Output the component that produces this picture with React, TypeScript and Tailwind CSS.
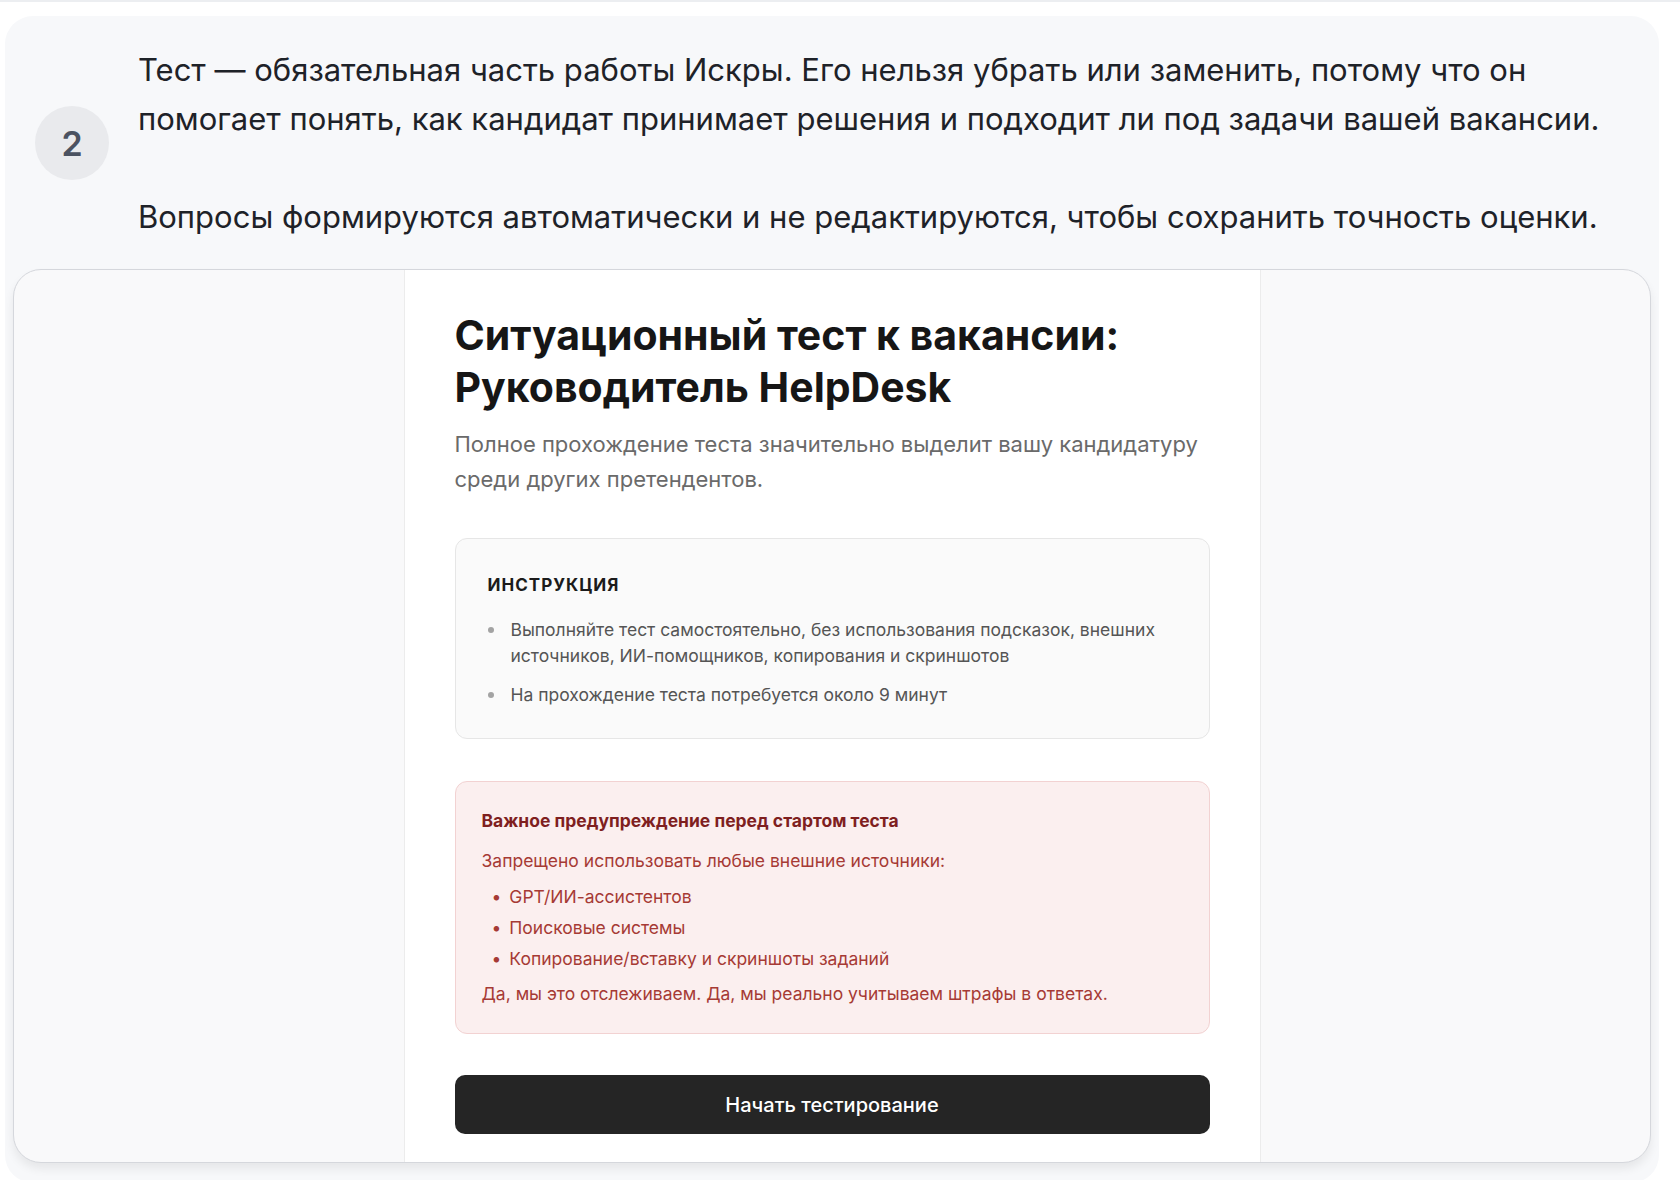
const rules = [
  "Выполняйте тест самостоятельно, без использования подсказок, внешних источников, ИИ-помощников, копирования и скриншотов",
  "На прохождение теста потребуется около 9 минут",
];

const banned = ["GPT/ИИ-ассистентов", "Поисковые системы", "Копирование/вставку и скриншоты заданий"];

function StepHeader() {
  return (
    <div className="flex items-center gap-[29px] pl-[30px] pr-6 pt-[29px]">
      <div className="flex h-[74px] w-[74px] shrink-0 items-center justify-center rounded-full bg-[#e9eaed] text-[34px] font-semibold text-[#4b5261]">
        2
      </div>
      <div className="text-[31px] leading-[49px] text-[#1e2228]">
        <p>
          Тест — обязательная часть работы Искры. Его нельзя убрать или заменить, потому что он
          <br />
          помогает понять, как кандидат принимает решения и подходит ли под задачи вашей вакансии.
        </p>
        <p className="mt-[49px]">Вопросы формируются автоматически и не редактируются, чтобы сохранить точность оценки.</p>
      </div>
    </div>
  );
}

function Instructions() {
  return (
    <div className="rounded-xl border border-[#e6e6e6] bg-[#fafafa] px-[32px] pb-[30px] pt-[34px]">
      <h3 className="text-[17px] font-bold uppercase leading-6 tracking-[0.06em] text-[#1b1b1b]">Инструкция</h3>
      <ul className="mt-[20px] flex flex-col gap-[13px]">
        {rules.map((r) => (
          <li key={r} className="flex gap-[17px] text-[17.5px] leading-[26px] text-[#555555]">
            <span className="mt-[10px] h-[6px] w-[6px] shrink-0 rounded-full bg-[#a3a3a3]" />
            <span>{r}</span>
          </li>
        ))}
      </ul>
    </div>
  );
}

function Warning() {
  return (
    <div className="rounded-xl border border-[#f2d2d2] bg-[#fbefef] px-[26px] pb-[27px] pt-[27px] text-[17.5px] leading-6">
      <p className="font-bold text-[#7f1f1f]">Важное предупреждение перед стартом теста</p>
      <p className="mt-4 text-[#a63a35]">Запрещено использовать любые внешние источники:</p>
      <ul className="mt-3 flex flex-col gap-[7px] text-[#a63a35]">
        {banned.map((b) => (
          <li key={b} className="flex gap-[8px] pl-[10px]">
            <span>•</span>
            <span>{b}</span>
          </li>
        ))}
      </ul>
      <p className="mt-[11px] text-[#a63a35]">Да, мы это отслеживаем. Да, мы реально учитываем штрафы в ответах.</p>
    </div>
  );
}

function Preview() {
  return (
    <div className="mx-2 mt-[28px] h-[894px] overflow-hidden rounded-[28px] border-[1.5px] border-[#d5d7dc] bg-[#f9f9fa] shadow-[0_6px_10px_rgba(0,0,0,0.07)]">
      <div className="mx-auto h-full w-[857px] border-x border-[#ececec] bg-white px-[50px] pt-[39px]">
        <h1 className="text-[41px] font-bold leading-[52px] text-[#161616]">
          Ситуационный тест к вакансии:
          <br />
          Руководитель HelpDesk
        </h1>
        <p className="mt-[14px] text-[22px] leading-[35px] text-[#6a6a6a]">
          Полное прохождение теста значительно выделит вашу кандидатуру
          <br />
          среди других претендентов.
        </p>
        <div className="mt-[41px]">
          <Instructions />
        </div>
        <div className="mt-[42px]">
          <Warning />
        </div>
        <button className="mt-[41px] h-[59px] w-full rounded-[10px] bg-[#252525] text-[20px] font-medium text-white">
          Начать тестирование
        </button>
      </div>
    </div>
  );
}

export default function App() {
  return (
    <div className="min-h-screen border-t-2 border-[#eceef1] bg-white font-['Inter',sans-serif]">
      <div className="ml-[5px] mr-[21px] mt-[14px] rounded-[28px] bg-[#f7f8fa] pb-5">
        <StepHeader />
        <Preview />
      </div>
    </div>
  );
}
